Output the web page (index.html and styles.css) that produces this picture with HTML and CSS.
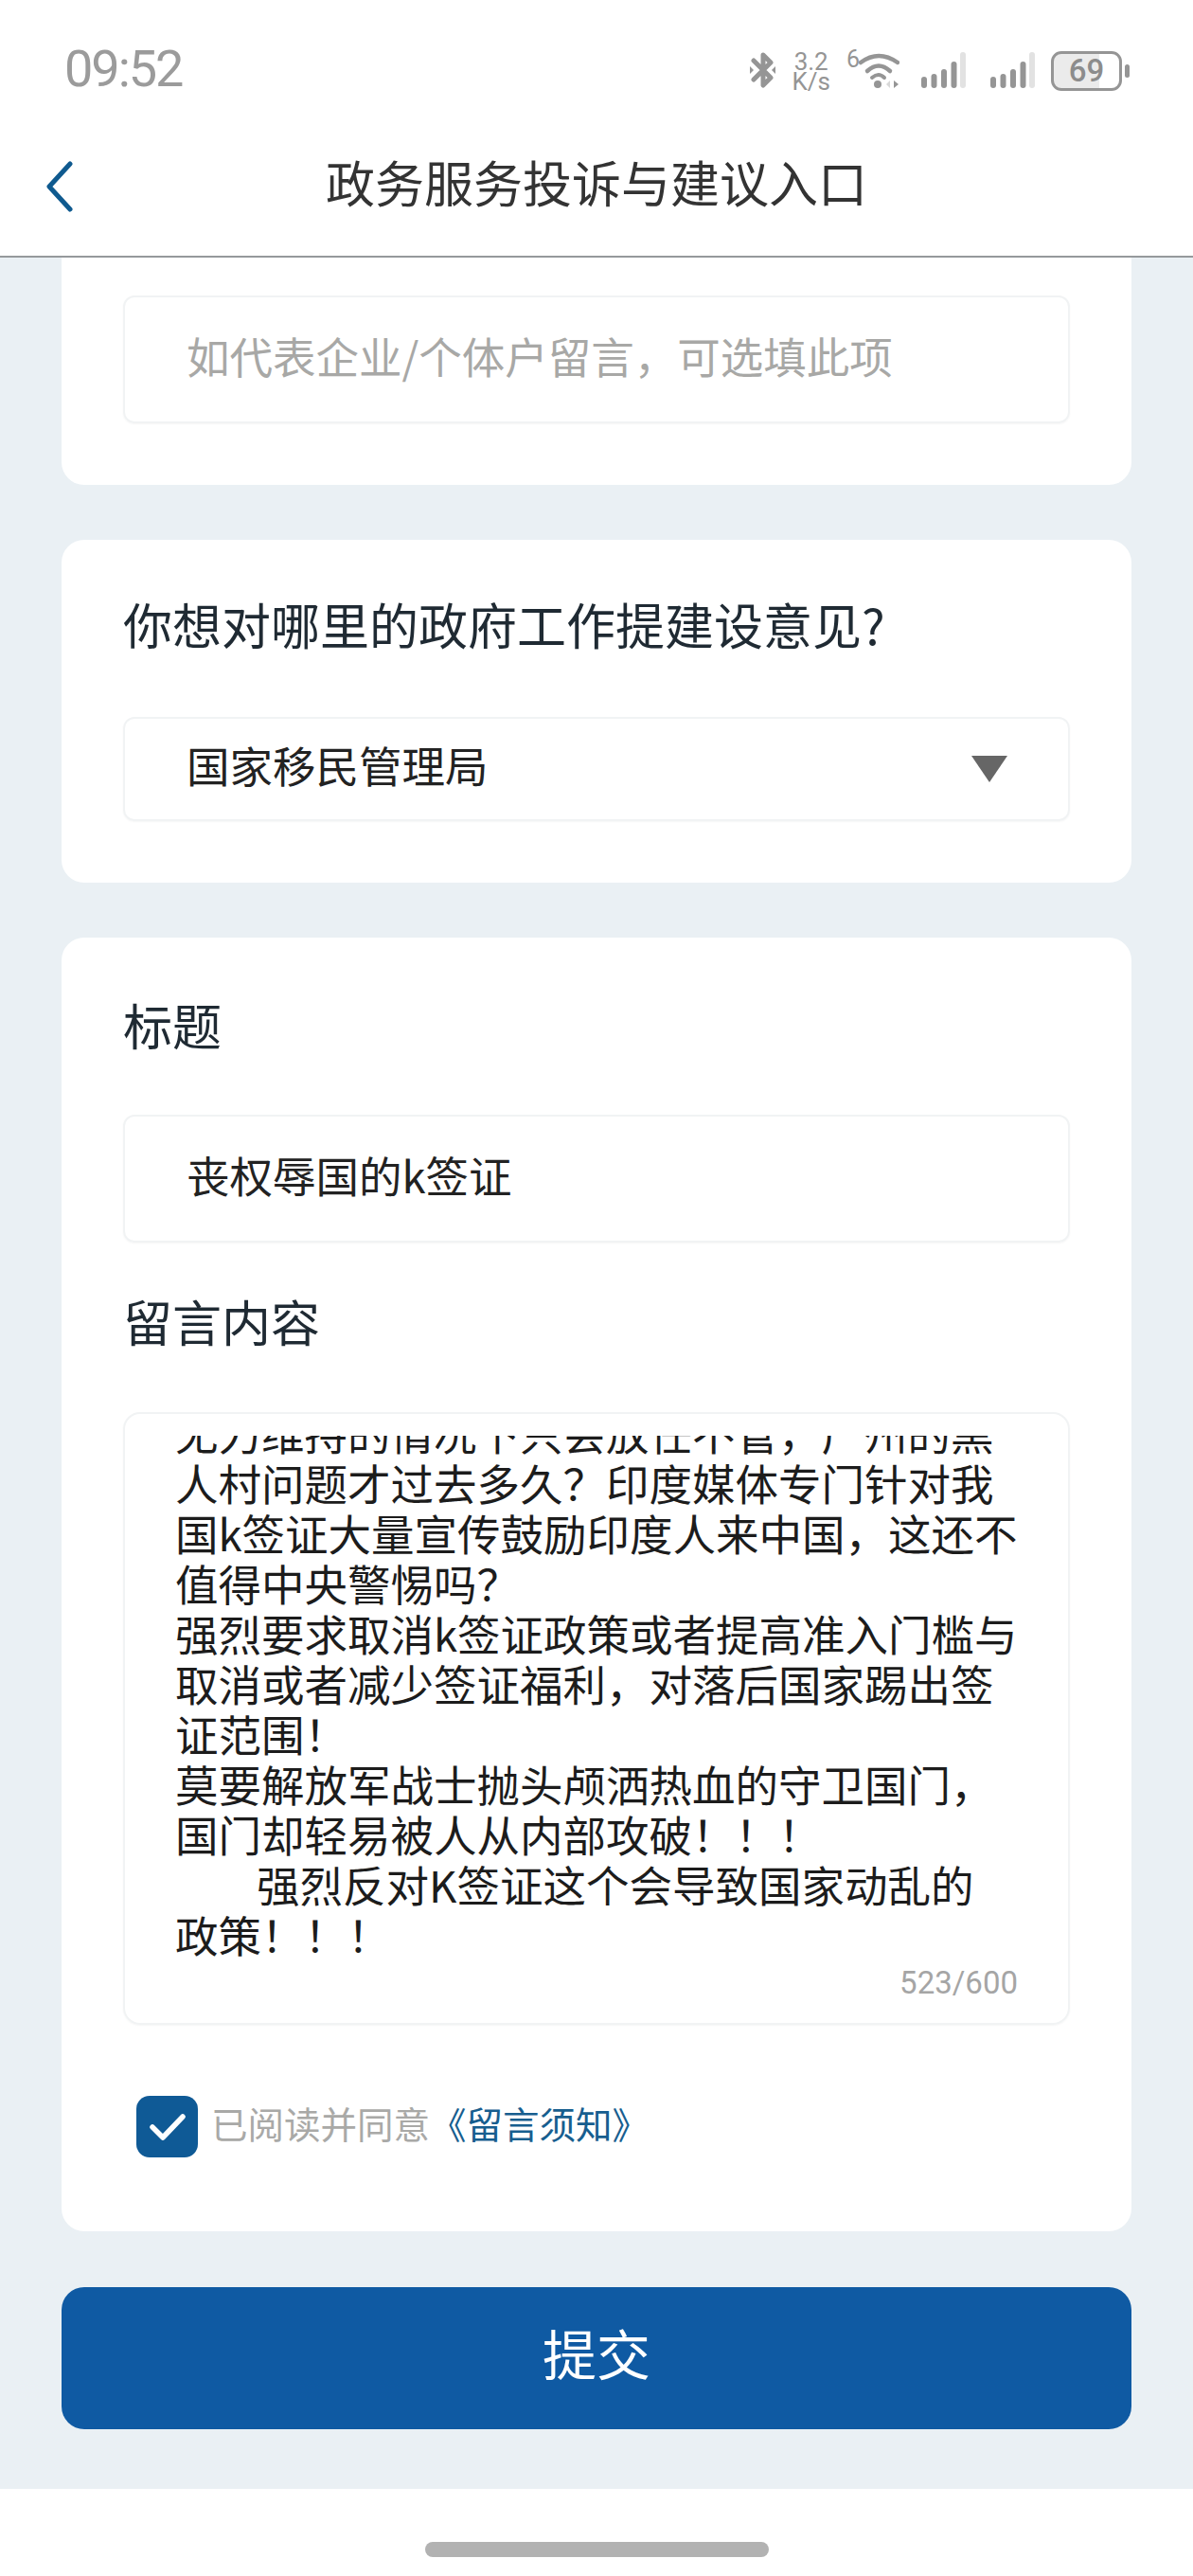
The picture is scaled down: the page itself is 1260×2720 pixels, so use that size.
FILE: index.html
```html
<!DOCTYPE html>
<html lang="zh-CN">
<head>
    <meta charset="UTF-8">
    <meta name="viewport" content="width=device-width, initial-scale=1.0">
    <title>政务服务投诉与建议入口</title>
    <link rel="stylesheet" href="styles.css">
</head>
<body>
    <div class="page">
        <div class="status-bar">
            <span class="status-time">09:52</span>
            <div class="status-icons">
                <svg class="icon-bt" viewBox="0 0 27 38" width="27" height="38">
                    <path d="M4 9 L22 27 L14 35 V3 L22 11 L4 29" fill="none" stroke="#959595" stroke-width="5" stroke-linejoin="round" stroke-linecap="round"/>
                    <path d="M0 15 L4 19 L0 23 Z M27 15 L23 19 L27 23 Z" fill="#959595"/>
                </svg>
                <span class="net-speed"><span>3.2</span><span>K/s</span></span>
                <div class="wifi">
                    <span class="wifi-six">6</span>
                    <svg viewBox="0 0 43 38" width="43" height="38">
                        <path d="M2 11 Q21 -3 41 11" fill="none" stroke="#959595" stroke-width="4.5" stroke-linecap="round"/>
                        <path d="M9 20 Q21 9 33 20" fill="none" stroke="#959595" stroke-width="4.5" stroke-linecap="round"/>
                        <path d="M14 27 Q21 21 27 27" fill="none" stroke="#959595" stroke-width="4" stroke-linecap="round"/>
                        <circle cx="20" cy="34" r="4" fill="#959595"/>
                        <path d="M37 30 L42 34 L37 38 Z" fill="#959595"/>
                        <path d="M33 30 L29 34 L33 38 Z" fill="#d8d8d8"/>
                    </svg>
                </div>
                <svg class="icon-signal" viewBox="0 0 48 38" width="48" height="38">
                    <rect x="1" y="26" width="6" height="12" rx="3" fill="#959595"/>
                    <rect x="11.5" y="23" width="6" height="15" rx="3" fill="#959595"/>
                    <rect x="22" y="18" width="6" height="20" rx="3" fill="#959595"/>
                    <rect x="32.5" y="10" width="6" height="28" rx="3" fill="#959595"/>
                    <rect x="42" y="0" width="6" height="38" rx="3" fill="#e2e2e2"/>
                </svg>
                <svg class="icon-signal" viewBox="0 0 48 38" width="48" height="38">
                    <rect x="1" y="26" width="6" height="12" rx="3" fill="#959595"/>
                    <rect x="11.5" y="23" width="6" height="15" rx="3" fill="#959595"/>
                    <rect x="22" y="18" width="6" height="20" rx="3" fill="#959595"/>
                    <rect x="32.5" y="10" width="6" height="28" rx="3" fill="#959595"/>
                    <rect x="42" y="0" width="6" height="38" rx="3" fill="#e2e2e2"/>
                </svg>
                <div class="battery">
                    <span class="battery-body">69</span>
                    <span class="battery-tip"></span>
                </div>
            </div>
        </div>

        <div class="top-bar">
            <svg class="back-icon" viewBox="0 0 30 54" width="30" height="54">
                <path d="M26 3 L4 27 L26 51" fill="none" stroke="#0f5a8f" stroke-width="5" stroke-linecap="round" stroke-linejoin="round"/>
            </svg>
            <h1>政务服务投诉与建议入口</h1>
        </div>

        <main class="content">
            <section class="card card-first">
                <div class="field field-text placeholder">如代表企业/个体户留言，可选填此项</div>
            </section>

            <section class="card card-second">
                <div class="card-label">你想对哪里的政府工作提建设意见?</div>
                <div class="field field-select">
                    <span>国家移民管理局</span>
                    <span class="select-arrow"></span>
                </div>
            </section>

            <section class="card card-third">
                <div class="card-label">标题</div>
                <div class="field field-text field-title">丧权辱国的k签证</div>
                <div class="card-label label-message">留言内容</div>
                <div class="field-message">
                    <div class="message-scroll">
                        <div class="message-text">
                            无力维持的情况下只会放任不管，广州的黑<br>
                            人村问题才过去多久？印度媒体专门针对我<br>
                            国k签证大量宣传鼓励印度人来中国，这还不<br>
                            值得中央警惕吗？<br>
                            强烈要求取消k签证政策或者提高准入门槛与<br>
                            取消或者减少签证福利，对落后国家踢出签<br>
                            证范围！<br>
                            莫要解放军战士抛头颅洒热血的守卫国门，<br>
                            国门却轻易被人从内部攻破！！！<br>
                            <span class="indent">强烈反对K签证这个会导致国家动乱的</span><br>
                            政策！！！
                        </div>
                    </div>
                    <div class="counter">523/600</div>
                </div>
                <div class="agree-row">
                    <span class="checkbox">
                        <svg viewBox="0 0 40 32" width="40" height="32">
                            <path d="M4 16 L15 27 L36 5" fill="none" stroke="#fff" stroke-width="5.5" stroke-linecap="round" stroke-linejoin="round"/>
                        </svg>
                    </span>
                    <span class="agree-text">已阅读并同意<a class="agree-link">《留言须知》</a></span>
                </div>
            </section>

            <button class="submit-btn" type="button">提交</button>
        </main>

        <div class="home-bar">
            <span class="home-pill"></span>
        </div>
    </div>
</body>
</html>
```

FILE: styles.css
```css
body {
    margin: 0;
    font-family: "Noto Sans CJK SC", "Noto Sans", sans-serif;
    color: #2b2b2b;
    background-color: #fff;
}
.page {
    width: 1260px;
    height: 2720px;
    display: flex;
    flex-direction: column;
    overflow: hidden;
}

/* status bar */
.status-bar {
    height: 110px;
    padding: 43px 67px 0 68px;
    box-sizing: border-box;
    display: flex;
    justify-content: space-between;
    align-items: flex-start;
    flex-shrink: 0;
}
.status-time {
    font-family: Roboto, sans-serif;
    font-size: 54px;
    letter-spacing: -2px;
    line-height: 60px;
    color: #9b9b9b;
}
.status-icons {
    display: flex;
    align-items: flex-start;
    padding-top: 12px;
}
.net-speed {
    display: flex;
    flex-direction: column;
    margin-left: 17px;
    font-family: Roboto, sans-serif;
    font-size: 26px;
    line-height: 21px;
    color: #959595;
    text-align: center;
}
.wifi {
    display: flex;
    margin-left: 17px;
}
.wifi-six {
    font-family: Roboto, sans-serif;
    font-size: 25px;
    line-height: 22px;
    margin-top: -3px;
    color: #959595;
}
.wifi svg {
    display: block;
    margin-left: -1px;
}
.icon-signal {
    margin-left: 22px;
}
.icon-signal + .icon-signal {
    margin-left: 25px;
}
.battery {
    display: flex;
    align-items: center;
    margin-left: 17px;
    margin-top: -1px;
}
.battery-body {
    width: 75px;
    height: 42px;
    box-sizing: border-box;
    border: 3px solid #959595;
    border-radius: 11px;
    background: linear-gradient(90deg, #ebebeb 69%, #fff 69%);
    font-family: Roboto, sans-serif;
    font-weight: 500;
    font-size: 33px;
    line-height: 36px;
    text-align: center;
    color: #8c8c8c;
}
.battery-tip {
    width: 5px;
    height: 14px;
    margin-left: 3px;
    border-radius: 3px;
    background-color: #959595;
}

/* title row */
.top-bar {
    height: 162px;
    box-sizing: border-box;
    display: grid;
    grid-template-columns: 1fr auto 1fr;
    align-items: center;
    padding: 4px 0 0 48px;
    border-bottom: 2px solid #95999c;
    flex-shrink: 0;
    background-color: #fff;
}
.back-icon {
    display: block;
    margin-top: 10px;
}
h1 {
    margin: 0 0 0 -48px;
    font-size: 52px;
    line-height: 70px;
    font-weight: 400;
    color: #333;
}

/* form */
.content {
    flex: 1;
    background-color: #eaf0f4;
    padding: 0 65px;
    min-height: 0;
}
.card {
    background-color: #fff;
    border-radius: 24px;
    padding: 60px 65px 65px;
    margin-bottom: 58px;
}
.card-first {
    padding-top: 40px;
    border-radius: 0 0 24px 24px;
}
.card-third {
    padding-top: 63px;
    padding-bottom: 78px;
    margin-bottom: 59px;
}
.card-label {
    height: 70px;
    font-size: 52px;
    line-height: 58px;
    color: #1f2a33;
}
.field {
    box-sizing: border-box;
    width: 1000px;
    margin-top: 57px;
    padding: 0 64px 10px 65px;
    border: 2px solid #f1f3f4;
    border-radius: 12px;
    box-shadow: 0 1px 2px rgba(0, 0, 0, 0.04);
    font-size: 45.5px;
    display: flex;
    align-items: center;
}
.field-text {
    height: 135px;
}
.card-first .field {
    margin-top: 0;
}
.placeholder {
    color: #a8a8a6;
}
.field-select {
    height: 110px;
    justify-content: space-between;
    color: #222;
}
.select-arrow {
    width: 0;
    height: 0;
    margin-top: 10px;
    border-left: 19px solid transparent;
    border-right: 19px solid transparent;
    border-top: 28px solid #666;
}
.field-title {
    margin-top: 54px;
    color: #222;
}
.label-message {
    margin-top: 54px;
}
.field-message {
    box-sizing: border-box;
    width: 1000px;
    height: 647px;
    margin-top: 55px;
    padding: 23px 53px 0 53px;
    border: 2px solid #f1f3f4;
    border-radius: 18px;
    box-shadow: 0 1px 2px rgba(0, 0, 0, 0.04);
}
.message-scroll {
    height: 553px;
    display: flex;
    flex-direction: column;
    justify-content: flex-end;
    overflow: hidden;
}
.message-text {
    flex-shrink: 0;
    font-size: 45.5px;
    line-height: 53px;
    color: #1c1c1c;
    white-space: nowrap;
}
.indent {
    margin-left: 86px;
}
.counter {
    margin-top: 6px;
    font-family: Roboto, sans-serif;
    font-size: 33px;
    line-height: 38px;
    text-align: right;
    color: #a5a5a5;
}
.agree-row {
    display: flex;
    align-items: center;
    margin: 75px 0 0 14px;
}
.checkbox {
    width: 65px;
    height: 65px;
    border-radius: 14px;
    background-color: #0f5a96;
    display: flex;
    align-items: center;
    justify-content: center;
}
.agree-text {
    margin: 0 0 10px 14px;
    font-size: 38.5px;
    line-height: 50px;
    color: #a9a9a7;
}
.agree-link {
    color: #175e8f;
}
.submit-btn {
    display: block;
    width: 100%;
    height: 150px;
    padding: 0 0 14px;
    border: none;
    border-radius: 24px;
    background-color: #0f5aa3;
    color: #fff;
    font-family: inherit;
    font-size: 57px;
}

/* gesture bar */
.home-bar {
    height: 92px;
    box-sizing: border-box;
    padding-top: 56px;
    display: flex;
    justify-content: center;
    flex-shrink: 0;
    background-color: #fff;
}
.home-pill {
    width: 363px;
    height: 16px;
    border-radius: 8px;
    background-color: #b2b2b2;
}
```
